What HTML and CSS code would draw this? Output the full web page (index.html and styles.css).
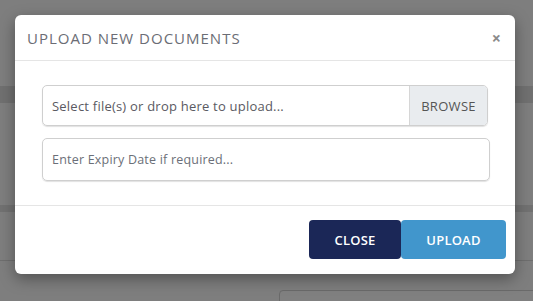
FILE: index.html
```html
<!DOCTYPE html>
<html>
<head>
    <title>Upload New Documents</title>
    <link rel="stylesheet" href="styles.css">
</head>
<body>
    <!-- page behind the backdrop -->
    <div class="page">
        <div class="band band-top"></div>
        <div class="gap gap-mid"></div>
        <div class="band band-mid"></div>
        <div class="gap gap-low"></div>
        <div class="band band-low"></div>
        <div class="panel-row">
            <div class="panel"></div>
        </div>
    </div>

    <div class="modal">
        <div class="modal-header">
            <h4 class="modal-title">UPLOAD NEW DOCUMENTS</h4>
            <span class="modal-close">&times;</span>
        </div>

        <div class="modal-body">
            <div class="file-input">
                <span class="file-label">Select file(s) or drop here to upload...</span>
                <span class="file-browse">BROWSE</span>
            </div>
            <div class="text-input">
                <span class="placeholder">Enter Expiry Date if required...</span>
            </div>
        </div>

        <div class="modal-footer">
            <button class="btn btn-close">CLOSE</button>
            <button class="btn btn-upload">UPLOAD</button>
        </div>
    </div>
</body>
</html>
```

FILE: styles.css
```css
body { margin: 0; background: #7e7e7e; font-family: "Open Sans", "Liberation Sans", sans-serif; }
.page { height: 301px; overflow: hidden; }
.band-top { margin-top: 86px; height: 17px; background: #707070; }
.gap-mid { height: 102px; }
.band-mid { height: 7px; background: #717171; }
.gap-low { height: 48px; }
.band-low { height: 1px; background: #6e6e6e; }
.panel-row { display: flex; justify-content: flex-end; padding-top: 29px; }
.panel { width: 258px; height: 30px; border: 1px solid #6a6a6a; border-radius: 4px; background: #808080; margin-right: -6px; }

.modal { position: absolute; left: 15px; top: 15px; width: 500px; height: 259px; background: #fff; border-radius: 6px; box-shadow: 0 5px 15px rgba(0,0,0,.35); }
.modal-header { height: 45px; display: flex; align-items: center; justify-content: space-between; padding: 0 14px 0 12px; border-bottom: 1px solid #e5e5e5; }
.modal-title { margin: 0; font-size: 15px; font-weight: 400; color: #6b6d75; letter-spacing: 1px; }
.modal-close { font-size: 16px; font-weight: 700; color: #8a8a8a; line-height: 1; }

.modal-body { padding: 24px 25px 24px 27px; display: flex; flex-direction: column; gap: 12px; }
.file-input { display: flex; height: 41px; border: 1px solid #cfcfcf; border-radius: 5px; box-shadow: 0 1px 1px rgba(0,0,0,.12); box-sizing: border-box; margin-right: 2px; overflow: hidden; }
.file-label { flex: 1; display: flex; align-items: center; padding-left: 9px; font-size: 13px; color: #5a5a62; letter-spacing: .22px; }
.file-browse { width: 77px; display: flex; align-items: center; justify-content: center; background: #e9ecef; border-left: 1px solid #d6d6d6; font-size: 13px; color: #555; letter-spacing: .3px; }
.text-input { height: 43px; border: 1px solid #cfcfcf; border-radius: 5px; box-shadow: 0 1px 1px rgba(0,0,0,.12); box-sizing: border-box; display: flex; align-items: center; padding-left: 9px; }
.placeholder { font-size: 12.5px; color: #6b6f78; letter-spacing: .2px; }

.modal-footer { border-top: 1px solid #e5e5e5; display: flex; justify-content: flex-end; padding: 14px 9px 0 0; }
.btn { height: 39px; border: none; border-radius: 4px; color: #fff; font-family: inherit; font-size: 13px; font-weight: 600; letter-spacing: .2px; }
.btn-close { width: 92px; background: #1b2757; }
.btn-upload { width: 105px; background: #4196cc; }
```
